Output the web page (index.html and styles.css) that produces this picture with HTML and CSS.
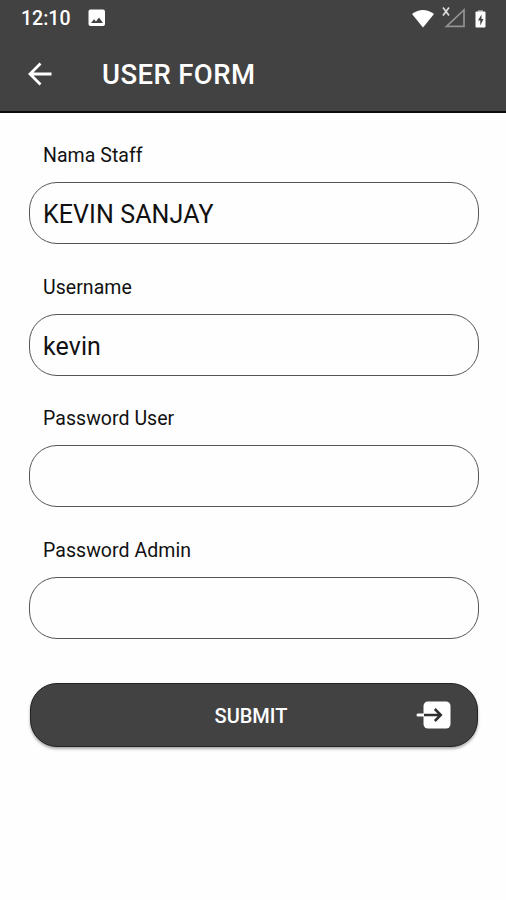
FILE: index.html
```html
<!DOCTYPE html>
<html lang="id">
<head>
<meta charset="utf-8">
<title>User Form</title>
<link rel="stylesheet" href="styles.css">
</head>
<body>
<header class="top">
  <div class="status">
    <span class="clock">12:10</span>
    <svg class="picture" width="18" height="18" viewBox="0 0 18 18"><rect x=".5" y=".5" width="16.5" height="16.5" rx="2" fill="#fff"/><path d="M3 14l3-3.700 2 2.300 3-4 4 5.400z" fill="#424242"/></svg>
    <svg class="signals" width="78" height="24" viewBox="0 0 78 24">
      <path d="M1 7Q12 -1 23 7L12 20.500z" fill="#fff"/>
      <path d="M32 .500l6 8M38 .500l-6 8" stroke="#ddd" stroke-width="1.700"/>
      <path d="M35.500 19.300H53V3z" fill="none" stroke="#929292" stroke-width="1.700"/>
      <path d="M67 3h5v3h-5z" fill="#999"/><rect x="64.500" y="4.500" width="10" height="16" rx="1" fill="#fff"/><path d="M70.500 7.500l-3.500 6h2.300v5l3.200-6.500h-2z" fill="#424242"/>
    </svg>
  </div>
  <div class="bar">
    <svg class="back" width="24" height="24" viewBox="0 0 24 24"><path d="M23.500 12H2M12.500 1.500L2 12l10.500 10.500" fill="none" stroke="#fff" stroke-width="2.800"/></svg>
    <h1>USER FORM</h1>
  </div>
</header>
<form class="form">
  <div class="field"><label for="name">Nama Staff</label><input id="name" type="text" value="KEVIN SANJAY"></div>
  <div class="field"><label for="user">Username</label><input id="user" type="text" value="kevin"></div>
  <div class="field"><label for="pass">Password User</label><input id="pass" type="password"></div>
  <div class="field"><label for="admin">Password Admin</label><input id="admin" type="password"></div>
  <button class="submit" type="button"><span>SUBMIT</span>
    <svg class="enter" width="36" height="28" viewBox="0 0 36 28"><rect x="7.500" y=".5" width="27" height="27" rx="4.500" fill="#fff"/><path d="M2 14h6" stroke="#fff" stroke-width="3" stroke-linecap="round"/><path d="M8 14h16.500M18.800 8l6 6-6 6" fill="none" stroke="#303030" stroke-width="2.500"/></svg>
  </button>
</form>
</body>
</html>
```
FILE: styles.css
```css
* { box-sizing: border-box; }
body { margin: 0; height: 900px; background: #fefefe; font-family: Roboto, sans-serif; color: #111; overflow: hidden; }
.top { height: 113px; background: #424242; border-bottom: 2px solid #0c0c0c; color: #fff; }
.status { height: 37px; display: flex; align-items: center; padding: 0 22px 0 21px; }
.clock { font-size: 19.5px; font-weight: 500; line-height: 24px; width: 67px; }
.signals { margin-left: auto; margin-right: -5px; }
.picture { margin-top: -2px; }
.bar { height: 74px; display: flex; align-items: center; padding-left: 28px; }
h1 { margin: 2px 0 0 50px; font-size: 27.5px; line-height: 32px; font-weight: 500; letter-spacing: .4px; }
.form { padding: 28px 28px 0; display: flex; flex-direction: column; }
.field { height: 131.5px; display: flex; flex-direction: column; }
label { height: 41px; padding-left: 15px; font-size: 19.5px; line-height: 30px; letter-spacing: .05px; }
input { width: 450px; height: 62.400px; margin-left: .5px; padding: 3px 13.5px 0; border: 1px solid #555; border-radius: 28px; background: transparent; font: 25px Roboto, sans-serif; letter-spacing: .1px; color: #111; outline: 0; }
.submit { display: flex; align-items: center; justify-content: center; position: relative; width: 448px; height: 64px; margin: 16px 0 0 2px; padding: 2px 6px 0 0; border: 1px solid #222; border-radius: 27px; background: #424242; color: #fff; box-shadow: 0 2px 3px #0005; font: 500 20px Roboto, sans-serif; }
.enter { position: absolute; right: 25px; top: 17px; }
```
